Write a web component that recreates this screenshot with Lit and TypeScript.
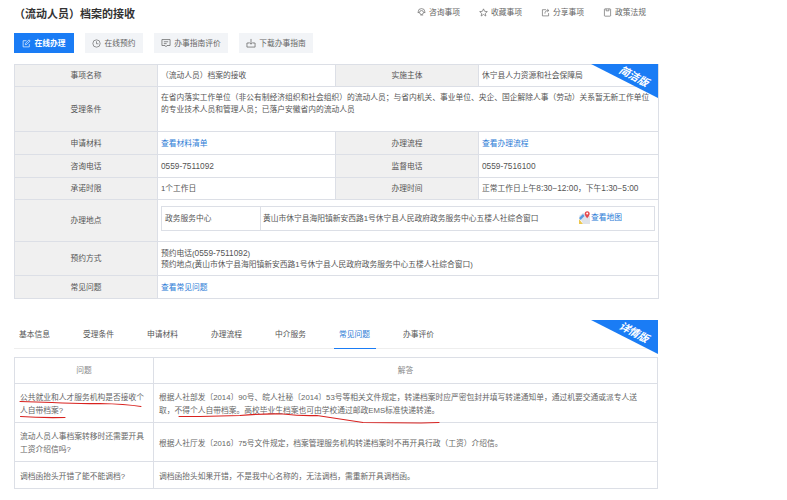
import { LitElement, html, css, svg } from "lit";
import { customElement } from "lit/decorators.js";

const ico = (body: unknown, w = 10) => html`<svg class="ic" width=${w} height=${w} viewBox="0 0 16 16" fill="none" stroke="currentColor" stroke-width="1.2">${body}</svg>`;

const icons = {
  consult: svg`<path d="M2 9V7a6 6 0 0 1 12 0v2"/><circle cx="8" cy="8" r="3.5"/><path d="M2 8h2M12 8h2M6 12.5h5"/>`,
  star: svg`<path d="M8 1.5l2 4.4 4.8.5-3.6 3.2 1 4.7L8 11.5l-4.2 2.8 1-4.7L1.2 6.4 6 5.9z"/>`,
  share: svg`<path d="M9 3H2.5v11h11V9"/><path d="M7 10c0-4 2-5.5 6-5.5M11 2l3 2.5L11 7"/>`,
  doc: svg`<rect x="2.5" y="1.5" width="11" height="13" rx="1"/><path d="M5.5 1.5v3.5h5V1.5"/>`,
  edit: svg`<path d="M13 9v5H2V3h6"/><path d="M6 10l.5-2.5L12.5 1.5l2 2-6 6z"/>`,
  clock: svg`<circle cx="8" cy="8" r="6.5"/><path d="M8 4v4.5h3.5"/>`,
  comment: svg`<path d="M1.5 2.5h13v9.5H9.5L8 14l-1.5-2H1.5z"/><path d="M4.5 6h7M4.5 9h4.5"/>`,
  download: svg`<path d="M8 1.5v8M5 7l3 3 3-3"/><path d="M5 8H1.5v6.5h13V8H11"/>`,
};

@customElement("app-root")
export class AppRoot extends LitElement {
  static styles = css`
    :host {
      display: block;
      position: relative;
      width: 787px;
      height: 500px;
      overflow: hidden;
      background: #fff;
      color: #555;
      font: 7.75px/11px "Liberation Sans", "Noto Sans CJK SC", sans-serif;
    }
    .wrap { width: 644px; margin-left: 14px; position: relative; }
    .head { display: flex; justify-content: space-between; align-items: center; height: 27px; }
    h1 { margin: 0; font-size: 11px; line-height: 28px; font-weight: 700; color: #333; }
    .links { display: flex; gap: 19px; margin-right: 12px; margin-top: -3px; }
    .links span, .btn { display: flex; align-items: center; gap: 3px; }
    .links span { color: #666; }
    .btns { display: flex; gap: 11px; margin-top: 6px; height: 20px; }
    .btn { background: #f2f4f7; color: #666; justify-content: center; width: 74px; }
    .btn.short { width: 58px; }
    .btn.primary { background: #1a7cf5; color: #fff; font-weight: 700; width: 60px; }
    table { border-collapse: collapse; table-layout: fixed; width: 644px; }
    td, th { border: 1px solid #dcdfe6; padding: 0 3px; font-weight: 400; }
    .info { margin-top: 11px; border-top: 1px solid #e8e8e8; }
    .info .k { background: #f0f0f0; text-align: center; }
    .info tr.r1 { height: 22px; }
    .info tr.r2 { height: 45px; }
    .info tr.r3 { height: 23px; }
    .info tr.r4 { height: 42px; }
    .info tr.r5 { height: 34px; }
    .top { vertical-align: top; padding-top: 5px; line-height: 12px; }
    .n { font-size: 8.3px; }
    a { color: #2b7bd6; text-decoration: none; }
    .place { display: flex; height: 25px; margin: -5px 0 0 0; border: 1px solid #dcdfe6; align-items: center; box-sizing: border-box; }
    .place .a { width: 99px; flex: none; padding-left: 3px; box-sizing: border-box; height: 100%; line-height: 24px; border-right: 1px solid #dcdfe6; }
    .place .b { flex: none; width: 318px; padding-left: 2px; box-sizing: border-box; }
    .place .c { display: flex; align-items: center; color: #2b7bd6; margin-top: -1px; }
    .tabs { display: flex; margin-top: 21px; height: 28px; border-bottom: 1px solid #eee; }
    .tabs span { width: 64px; padding-left: 5px; box-sizing: border-box; flex: none; line-height: 29px; position: relative; }
    .tabs .on { color: #2b7bd6; }
    .tabs .on::after { content: ""; position: absolute; left: 0; width: 42px; bottom: -1px; height: 1px; background: #1a7cf5; }
    .faq { margin-top: 8px; }
    .faq th { color: #888; text-align: center; }
    .faq .h0 { height: 26px; }
    .faq td { padding: 2px 5px 0; line-height: 13px; color: #666; }
    .faq .h1 { height: 39px; }
    .faq .h2 { height: 39px; }
    .faq .h3 { height: 27px; }
    .ribbon { position: absolute; right: 0; width: 67px; height: 34px; background: #1a7cf5; clip-path: polygon(0 0, 100% 0, 100% 100%); }
    .ribbon b { position: absolute; left: 23px; top: 6px; width: 40px; text-align: center; color: #fff; font: italic 700 10.5px/12px "Liberation Sans", "Noto Sans CJK SC", sans-serif; transform: rotate(28deg); }
    .marks { position: absolute; left: 0; top: 0; pointer-events: none; }
    .ic { flex: none; }
  `;

  render() {
    const tabs = ["基本信息", "受理条件", "申请材料", "办理流程", "中介服务", "常见问题", "办事评价"];
    return html`
      <div class="wrap">
        <div class="head">
          <h1>（流动人员）档案的接收</h1>
          <div class="links">
            <span>${ico(icons.consult, 9)}咨询事项</span>
            <span>${ico(icons.star, 9)}收藏事项</span>
            <span>${ico(icons.share, 9)}分享事项</span>
            <span>${ico(icons.doc, 9)}政策法规</span>
          </div>
        </div>
        <div class="btns">
          <div class="btn primary">${ico(icons.edit, 9)}在线办理</div>
          <div class="btn short">${ico(icons.clock, 9)}在线预约</div>
          <div class="btn">${ico(icons.comment, 10)}办事指南评价</div>
          <div class="btn">${ico(icons.download, 10)}下载办事指南</div>
        </div>
        <div class="ribbon" style="top:64px"><b>简洁版</b></div>
        <table class="info">
          <colgroup><col style="width:143px"/><col style="width:178px"/><col style="width:143px"/><col style="width:180px"/></colgroup>
          <tr class="r1"><td class="k">事项名称</td><td>（流动人员）档案的接收</td><td class="k">实施主体</td><td>休宁县人力资源和社会保障局</td></tr>
          <tr class="r2"><td class="k">受理条件</td><td class="top" colspan="3">在省内落实工作单位（非公有制经济组织和社会组织）的流动人员；与省内机关、事业单位、央企、国企解除人事（劳动）关系暂无新工作单位的专业技术人员和管理人员；已落户安徽省内的流动人员</td></tr>
          <tr class="r3"><td class="k">申请材料</td><td><a>查看材料清单</a></td><td class="k">办理流程</td><td><a>查看办理流程</a></td></tr>
          <tr class="r3"><td class="k">咨询电话</td><td class="n">0559-7511092</td><td class="k">监督电话</td><td class="n">0559-7516100</td></tr>
          <tr class="r1"><td class="k">承诺时限</td><td>1个工作日</td><td class="k">办理时间</td><td>正常工作日上午<span class="n">8:30−12:00</span>，下午<span class="n">1:30−5:00</span></td></tr>
          <tr class="r4"><td class="k">办理地点</td><td colspan="3">
            <div class="place"><div class="a">政务服务中心</div><div class="b">黄山市休宁县海阳镇新安西路1号休宁县人民政府政务服务中心五楼人社综合窗口</div>
              <div class="c"><svg width="12" height="13" viewBox="0 0 12 13"><path d="M0 5l4-3 7 3v8H4z" fill="#dfe3ea"/><path d="M0 13V8l4 5z" fill="#ecc64e"/><path d="M0 7l4-4 1.5 2L1.5 9z" fill="#5a9be0"/><path d="M8.2 0.2a2.5 2.5 0 0 1 2.5 2.5c0 1.6-2.5 4.6-2.5 4.6S5.7 4.3 5.7 2.7A2.5 2.5 0 0 1 8.2.2z" fill="#e5484d"/><circle cx="8.2" cy="2.6" r="1" fill="#fff"/></svg>查看地图</div>
            </div></td></tr>
          <tr class="r5"><td class="k">预约方式</td><td colspan="3">预约电话(<span class="n">0559-7511092</span>)<br/>预约地点(黄山市休宁县海阳镇新安西路1号休宁县人民政府政务服务中心五楼人社综合窗口)</td></tr>
          <tr class="r3"><td class="k">常见问题</td><td colspan="3"><a>查看常见问题</a></td></tr>
        </table>
        <div class="tabs">${tabs.map((t) => html`<span class=${t === "常见问题" ? "on" : ""}>${t}</span>`)}</div>
        <div class="ribbon" style="top:320px"><b>详情版</b></div>
        <table class="faq">
          <colgroup><col style="width:139px"/><col/></colgroup>
          <tr class="h0"><th>问题</th><th>解答</th></tr>
          <tr class="h1"><td>公共就业和人才服务机构是否接收个人自带档案?</td><td>根据人社部发〔2014〕90号、皖人社秘〔2014〕53号等相关文件规定，转递档案时应严密包封并填写转递通知单，通过机要交通或派专人送取，不得个人自带档案。高校毕业生档案也可由学校通过邮政EMS标准快递转递。</td></tr>
          <tr class="h2"><td>流动人员人事档案转移时还需要开具工资介绍信吗?</td><td>根据人社厅发〔2016〕75号文件规定，档案管理服务机构转递档案时不再开具行政（工资）介绍信。</td></tr>
          <tr class="h3"><td>调档函抬头开错了能不能调档?</td><td>调档函抬头如果开错，不是我中心名称的，无法调档，需重新开具调档函。</td></tr>
        </table>
      </div>
      <svg class="marks" width="787" height="500" fill="none" stroke="#d8221f" stroke-width="1.1" stroke-linecap="round">
        <path d="M20 401.5L52 402.5Q80 404 100 403.5Q125 404 141 406.5"/>
        <path d="M20.5 416.5Q40 418 65 417.5"/>
        <path d="M179 416.5L200 416.5L240 415.5Q262 413.5 283 414Q300 416 317 415.5Q340 419 363 422.5L421 423L439 422.5"/>
      </svg>
    `;
  }
}
